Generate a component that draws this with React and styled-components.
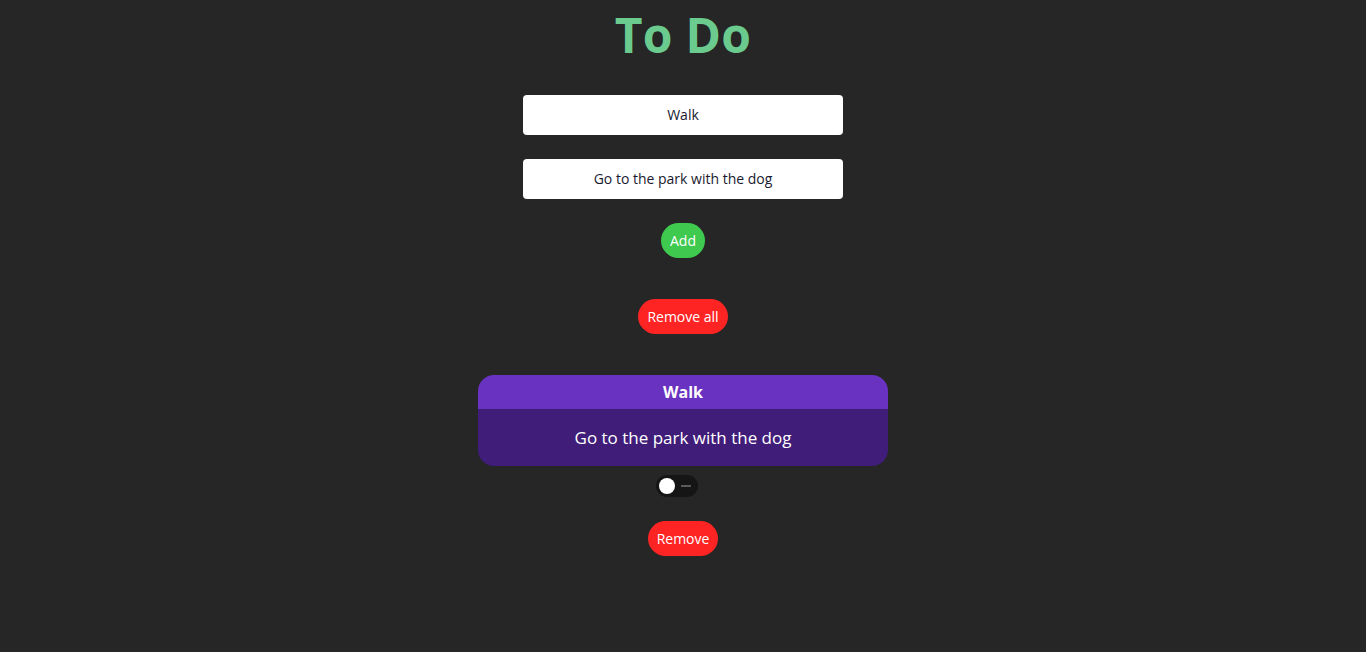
import React, { useState } from "react";
import styled, { createGlobalStyle } from "styled-components";

const Global = createGlobalStyle`
  html, body { margin: 0; padding: 0; background: #262626; }
  body { font-family: "Open Sans", "DejaVu Sans", sans-serif; }
`;

const Page = styled.div`
  min-height: 652px;
  background: #262626;
  display: flex;
  flex-direction: column;
  align-items: center;
  padding-top: 6px;
  box-sizing: border-box;
`;

const Title = styled.h1`
  margin: 0;
  font-family: "Open Sans", sans-serif;
  font-weight: 700;
  font-size: 48px;
  line-height: 58px;
  color: #6bcb8e;
  letter-spacing: 0.3px;
`;

const Form = styled.div`
  margin-top: 31px;
  display: flex;
  flex-direction: column;
  align-items: center;
  gap: 24px;
`;

const Input = styled.input`
  width: 320px;
  height: 40px;
  box-sizing: border-box;
  border: none;
  border-radius: 4px;
  background: #fff;
  text-align: center;
  font-family: "Open Sans", sans-serif;
  font-size: 14px;
  padding: 0 0 2px;
  color: #1a1a2e;
  outline: none;
`;

const Pill = styled.button`
  height: 35px;
  padding: 0 9px;
  border: none;
  border-radius: 18px;
  background: ${(p) => p.$bg};
  color: #fff;
  font-family: "Open Sans", sans-serif;
  font-size: 14px;
  cursor: pointer;
  margin-top: ${(p) => p.$mt || 0}px;
`;

const Card = styled.div`
  margin-top: 41px;
  width: 410px;
  border-radius: 16px;
  overflow: hidden;
  display: flex;
  flex-direction: column;
`;

const CardHeader = styled.div`
  height: 34px;
  background: #6a32c0;
  display: flex;
  align-items: center;
  justify-content: center;
  color: #fff;
  font-weight: 700;
  font-size: 16px;
`;

const CardBody = styled.div`
  height: 57px;
  background: #3f1d78;
  display: flex;
  align-items: center;
  justify-content: center;
  color: #fff;
  font-size: 17px;
`;

const Toggle = styled.div`
  margin-top: 9px;
  margin-right: 12px;
  width: 42px;
  height: 22px;
  border-radius: 11px;
  background: #151515;
  display: flex;
  align-items: center;
  padding: 0 3px;
  box-sizing: border-box;
`;

const Knob = styled.span`
  width: 16px;
  height: 16px;
  border-radius: 50%;
  background: #fff;
`;

const Dash = styled.span`
  width: 10px;
  height: 2px;
  background: #5a5a5a;
  margin-left: 6px;
`;

export default function App() {
  const [title, setTitle] = useState("Walk");
  const [desc, setDesc] = useState("Go to the park with the dog");
  return (
    <>
      <Global />
      <Page>
        <Title>To Do</Title>
        <Form>
          <Input value={title} onChange={(e) => setTitle(e.target.value)} />
          <Input value={desc} onChange={(e) => setDesc(e.target.value)} />
        </Form>
        <Pill $bg="#3fc94f" $mt={24}>Add</Pill>
        <Pill $bg="#ff2424" $mt={41}>Remove all</Pill>
        <Card>
          <CardHeader>Walk</CardHeader>
          <CardBody>Go to the park with the dog</CardBody>
        </Card>
        <Toggle>
          <Knob />
          <Dash />
        </Toggle>
        <Pill $bg="#ff2424" $mt={24}>Remove</Pill>
      </Page>
    </>
  );
}
